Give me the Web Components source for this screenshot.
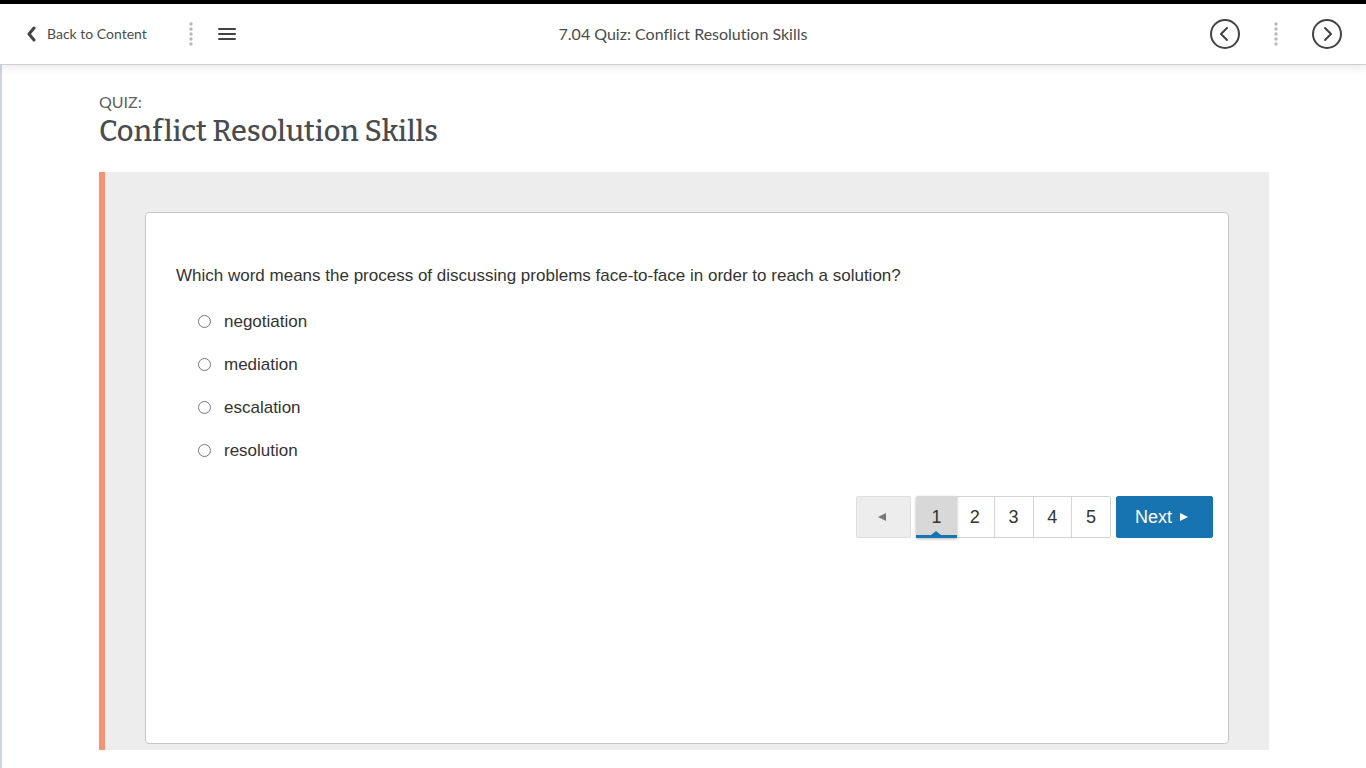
<!DOCTYPE html>
<html lang="en">
<head>
<meta charset="utf-8">
<meta name="viewport" content="width=device-width, initial-scale=1">
<title>7.04 Quiz: Conflict Resolution Skills</title>
<style>
    body {
        margin: 0;
        min-height: 100vh;
        display: flex;
        flex-direction: column;
        background: #fff;
        color: #494c4e;
        font-family: Lato, "Liberation Sans", sans-serif;
        font-variant-ligatures: none;
    }
</style>
</head>
<body>
<content-header heading="7.04 Quiz: Conflict Resolution Skills"></content-header>
<quiz-page>
    <span slot="kind">QUIZ:</span>
    <span slot="name">Conflict Resolution Skills</span>
    <quiz-question options="negotiation,mediation,escalation,resolution">Which word means the process of discussing problems face-to-face in order to reach a solution?</quiz-question>
    <quiz-pager pages="5" current="1"></quiz-pager>
</quiz-page>

<script>
// Column of small dots between toolbar items
class DotDivider extends HTMLElement {
    constructor() {
        super();
        this.attachShadow({ mode: 'open' }).innerHTML = `
            <style>
                :host { display: block; width: 4px; height: 24px; }
                svg { display: block; }
            </style>
            <svg width="4" height="24" fill="#b8b8b8" aria-hidden="true">
                <circle cx="2" cy="2" r="1.7"/><circle cx="2" cy="7" r="1.7"/><circle cx="2" cy="12" r="1.7"/><circle cx="2" cy="17" r="1.7"/><circle cx="2" cy="22" r="1.7"/>
            </svg>
        `;
    }
}
customElements.define('dot-divider', DotDivider);

class ContentHeader extends HTMLElement {
    constructor() {
        super();
        this.attachShadow({ mode: 'open' });
    }

    connectedCallback() {
        this.shadowRoot.innerHTML = `
            <style>
                :host {
                    display: block;
                    position: relative;
                    z-index: 1;
                    background: #fff;
                    border-top: 4px solid #000;
                    border-bottom: 1px solid #cfcfcf;
                    box-shadow: 0 2px 10px rgba(0, 0, 0, 0.1);
                }
                nav {
                    display: grid;
                    grid-template-columns: 1fr auto 1fr;
                    align-items: center;
                    height: 60px;
                    padding: 0 24px;
                }
                .side { display: flex; align-items: center; }
                .end { justify-content: flex-end; gap: 34px; }
                .start { gap: 25px; }
                .back {
                    display: flex;
                    align-items: center;
                    gap: 9px;
                    padding: 0 17px 0 2px;
                    color: #494c4e;
                    font-size: 14px;
                    line-height: 20px;
                    text-decoration: none;
                }
                h1 {
                    margin: 0;
                    font-size: 16px;
                    font-weight: 400;
                    line-height: 20px;
                }
                button {
                    display: block;
                    padding: 0;
                    border: 0;
                    background: none;
                    color: #434343;
                    cursor: pointer;
                }
                svg { display: block; }
            </style>
            <nav>
                <div class="side start">
                    <a class="back" href="#content">
                        <svg width="12" height="16" fill="none" stroke="#434343" stroke-width="3" aria-hidden="true"><path d="M8 2 3 8l5 6" stroke-linecap="round" stroke-linejoin="round"/></svg>
                        Back to Content
                    </a>
                    <dot-divider></dot-divider>
                    <button type="button" aria-label="Table of contents">
                        <svg width="18" height="14" stroke="currentColor" stroke-width="2" stroke-linecap="round"><path d="M1 2h16M1 7h16M1 12h16"/></svg>
                    </button>
                </div>
                <h1></h1>
                <div class="side end">
                    <button type="button" aria-label="Previous">
                        <svg width="30" height="30" fill="none" stroke="currentColor" stroke-width="2" stroke-linecap="round" stroke-linejoin="round"><circle cx="15" cy="15" r="14"/><path d="m17 9-6 6 6 6"/></svg>
                    </button>
                    <dot-divider></dot-divider>
                    <button type="button" aria-label="Next">
                        <svg width="30" height="30" fill="none" stroke="currentColor" stroke-width="2" stroke-linecap="round" stroke-linejoin="round"><circle cx="15" cy="15" r="14"/><path d="m13 9 6 6-6 6"/></svg>
                    </button>
                </div>
            </nav>
        `;
        this.shadowRoot.querySelector('h1').textContent = this.getAttribute('heading');
    }
}
customElements.define('content-header', ContentHeader);

class QuizPage extends HTMLElement {
    constructor() {
        super();
        this.attachShadow({ mode: 'open' }).innerHTML = `
            <style>
                :host {
                    flex: 1;
                    display: flex;
                    flex-direction: column;
                    padding: 27px 97px 18px;
                    border-left: 2px solid #cdd5de;
                }
                .kind {
                    margin: 0;
                    color: #5c5f66;
                    font-size: 16px;
                    line-height: 20px;
                }
                h2 {
                    margin: 0 0 20px;
                    color: #494c4e;
                    font-family: Bitter, "DejaVu Serif", serif;
                    font-size: 29px;
                    font-weight: 500;
                    line-height: 40px;
                }
                .panel {
                    flex: 1;
                    display: flex;
                    padding: 40px 40px 6px;
                    border-left: 6px solid #f29475;
                    background: #ededed;
                }
                .card {
                    flex: 1;
                    padding: 53px 15px 30px 30px;
                    border: 1px solid #c6c6c6;
                    border-radius: 4px;
                    background: #fff;
                }
            </style>
            <p class="kind"><slot name="kind"></slot></p>
            <h2><slot name="name"></slot></h2>
            <main class="panel">
                <div class="card"><slot></slot></div>
            </main>
        `;
    }
}
customElements.define('quiz-page', QuizPage);

class QuizQuestion extends HTMLElement {
    constructor() {
        super();
        this.attachShadow({ mode: 'open' });
    }

    connectedCallback() {
        const options = this.getAttribute('options').split(',');
        this.shadowRoot.innerHTML = `
            <style>
                :host {
                    display: block;
                    color: #333;
                    font: 17px/20px "Liberation Sans", Arial, sans-serif;
                }
                fieldset { min-width: 0; margin: 0; padding: 0; border: 0; }
                legend { padding: 0 0 14px; }
                label {
                    display: flex;
                    align-items: center;
                    gap: 13px;
                    width: fit-content;
                    height: 43px;
                    padding-left: 22px;
                }
                input { width: 13px; height: 13px; margin: 0; }
            </style>
            <fieldset>
                <legend><slot></slot></legend>
                ${options.map(option => `<label><input type="radio" name="answer" value="${option}">${option}</label>`).join('')}
            </fieldset>
        `;
    }
}
customElements.define('quiz-question', QuizQuestion);

class QuizPager extends HTMLElement {
    constructor() {
        super();
        this.attachShadow({ mode: 'open' });
    }

    connectedCallback() {
        this.render();
        this.shadowRoot.addEventListener('click', event => {
            const button = event.target.closest('button');
            if (!button || button.disabled) return;
            const current = Number(this.getAttribute('current'));
            const page = button.dataset.page || current + Number(button.dataset.step);
            this.setAttribute('current', Math.min(page, this.getAttribute('pages')));
            this.render();
        });
    }

    render() {
        const count = Number(this.getAttribute('pages'));
        const current = Number(this.getAttribute('current'));
        const pages = Array.from({ length: count }, (_, i) => i + 1);

        this.shadowRoot.innerHTML = `
            <style>
                :host {
                    display: flex;
                    justify-content: flex-end;
                    gap: 5px;
                    margin-top: 24px;
                    font-variant-ligatures: none;
                }
                button {
                    display: flex;
                    align-items: center;
                    justify-content: center;
                    box-sizing: border-box;
                    height: 42px;
                    padding: 0;
                    border: 1px solid #d3d3d3;
                    background: #fff;
                    color: #333;
                    font: 18px/20px "Liberation Sans", Arial, sans-serif;
                    cursor: pointer;
                }
                .prev {
                    width: 55px;
                    padding-right: 4px;
                    border-color: #dedede;
                    border-radius: 2px;
                    background: #ededed;
                    color: #777;
                }
                .pages { display: flex; width: 195px; }
                .pages button { flex: 1; border-left: 0; }
                .pages button:last-child { border-radius: 0 2px 2px 0; }
                .pages [aria-current] {
                    flex: none;
                    position: relative;
                    width: 41px;
                    margin-right: -1px;
                    border: 0;
                    border-radius: 2px 0 0 2px;
                    background: #d8d8d8;
                    box-shadow: 0 1px 3px rgba(0, 0, 0, 0.3);
                }
                /* blue bar with a notch under the current page */
                .mark { position: absolute; left: 0; bottom: 0; width: 100%; }
                .next {
                    gap: 8px;
                    width: 97px;
                    padding-right: 6px;
                    border-color: #1874b0;
                    border-radius: 2px;
                    background: #1874b0;
                    color: #fff;
                }
                svg { display: block; }
            </style>
            <button type="button" class="prev" data-step="-1" aria-label="Previous question" ${current === 1 ? 'disabled' : ''}>
                <svg width="8" height="8" fill="currentColor"><path d="M8 0v8L0 4z"/></svg>
            </button>
            <div class="pages">
                ${pages.map(page => page === current
                    ? `<button type="button" data-page="${page}" aria-current="page">${page}<svg class="mark" viewBox="0 0 41 8" height="8" fill="#1874b0"><path d="M0 5h15l5-4 5 4h16v3H0z"/></svg></button>`
                    : `<button type="button" data-page="${page}">${page}</button>`).join('')}
            </div>
            <button type="button" class="next" data-step="1">
                Next
                <svg width="8" height="8" fill="currentColor"><path d="M0 0v8l8-4z"/></svg>
            </button>
        `;
    }
}
customElements.define('quiz-pager', QuizPager);
</script>
</body>
</html>
